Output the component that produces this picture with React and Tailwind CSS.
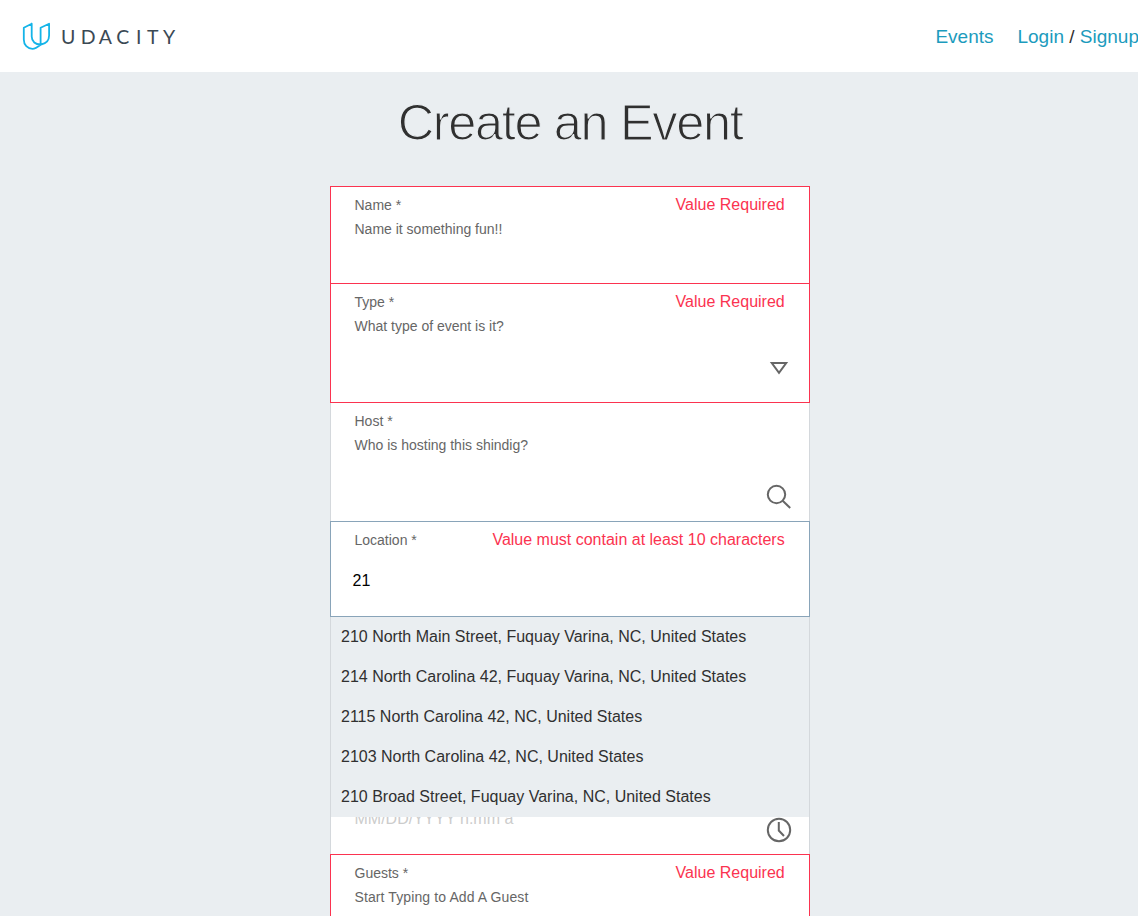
const frames = {
  error: 'z-10 border-[#fb3350]',
  idle: 'border-[#d4d8dc]',
  focus: 'z-20 border-[#89a4b9]',
};

const suggestions = [
  '210 North Main Street, Fuquay Varina, NC, United States',
  '214 North Carolina 42, Fuquay Varina, NC, United States',
  '2115 North Carolina 42, NC, United States',
  '2103 North Carolina 42, NC, United States',
  '210 Broad Street, Fuquay Varina, NC, United States',
];

function Logo() {
  return (
    <svg className="block" width="160" height="32" viewBox="20 20 160 32" fill="none">
      <path
        d="M31.7 23.7 L23.8 27.7 V39.5 C23.8 45 27.5 48.8 32.5 48.8 C35.5 48.8 38 46.8 41 44.5 C46 43.6 49.1 40.3 49.1 35.5 V23.7 L40.6 27.8 V44 M31.7 23.7 V36.5 C31.7 41.5 35.5 44.8 41 44.5"
        stroke="#14b4e8"
        strokeWidth="1.8"
        strokeLinejoin="round"
        strokeLinecap="round"
      />
      <g fill="#3b4954" fontFamily="Lato, sans-serif" fontSize="19.5">
        <text x="61" y="43.5">U</text>
        <text x="80.8" y="43.5">D</text>
        <text x="98.7" y="43.5">A</text>
        <text x="116.2" y="43.5">C</text>
        <text x="136" y="43.5">I</text>
        <text x="147" y="43.5">T</text>
        <text x="163" y="43.5">Y</text>
      </g>
    </svg>
  );
}

function Triangle() {
  return (
    <svg width="26" height="26" viewBox="0 0 26 26" fill="none" stroke="#666" strokeWidth="2">
      <path d="M5.8 8 H20.2 L13 17.8 Z" />
    </svg>
  );
}

function Magnifier() {
  return (
    <svg width="26" height="26" viewBox="0 0 26 26" fill="none" stroke="#666" strokeWidth="2">
      <circle cx="10.5" cy="10.5" r="8.7" />
      <path d="M16.7 16.7 L24.2 24" />
    </svg>
  );
}

function Clock() {
  return (
    <svg width="26" height="26" viewBox="0 0 26 26" fill="none" stroke="#666" strokeWidth="2">
      <circle cx="13" cy="13" r="11.2" />
      <path d="M12.8 5 V13.5 L18 19" />
    </svg>
  );
}

function Field({ label, hint, error, state, size, children }) {
  return (
    <div className={`relative -mb-px flex flex-col border bg-white pl-[23.5px] ${frames[state]} ${size}`}>
      <div className="mt-[6px] flex h-6 items-center justify-between pr-[24.3px] text-sm text-[#666]">
        <span>{label}</span>
        <span className="text-base text-[#fb3350]">{error}</span>
      </div>
      <div className="h-6 text-sm leading-6 text-[#666]">{hint}</div>
      {children}
    </div>
  );
}

export default function App() {
  return (
    <div className="h-[916px] overflow-hidden bg-[#eaeef1] font-['Liberation_Sans',Arial,sans-serif] text-[#303030]">
      <header className="flex h-[72px] items-center justify-between bg-white pl-5">
        <Logo />
        <nav className="-mr-px flex gap-6 whitespace-nowrap pt-[2px] text-[19px] text-[#1c9bbd]">
          <a>Events</a>
          <span>
            <a>Login</a>
            <span className="text-[#303030]"> / </span>
            <a>Signup</a>
          </span>
        </nav>
      </header>
      <main className="mx-auto w-[480px] translate-x-px">
        <h1 className="mb-[35px] mt-[23px] whitespace-nowrap text-center text-[50.5px] leading-[56px] tracking-[-1.35px] [-webkit-text-stroke:1.2px_#eaeef1]">
          Create an Event
        </h1>
        <form>
          <Field label="Name *" hint="Name it something fun!!" error="Value Required" state="error" size="h-[98px]" />
          <Field label="Type *" hint="What type of event is it?" error="Value Required" state="error" size="h-[120px]">
            <div className="mr-[17px] mt-[17px] flex justify-end"><Triangle /></div>
          </Field>
          <Field label="Host *" hint="Who is hosting this shindig?" state="idle" size="h-[120px]">
            <div className="mr-[17px] mt-[27px] flex justify-end"><Magnifier /></div>
          </Field>
          <Field label="Location *" error="Value must contain at least 10 characters" state="focus" size="h-[96px]">
            <div className="-ml-[2px] -mt-[7px] h-6 text-base leading-6 text-black">21</div>
            <ul className="absolute -inset-x-px top-[95px] border-x border-[#d4d8dc] bg-[#eaeef1]">
              {suggestions.map((text) => (
                <li key={text} className="h-10 whitespace-nowrap pl-[10px] text-base leading-10">
                  {text}
                </li>
              ))}
            </ul>
          </Field>
          <Field state="idle" size="h-[239px]">
            <div className="mt-[135px] flex items-start justify-between pr-[17px]">
              <span className="mt-px text-base leading-6 text-[#ccc]">MM/DD/YYYY h:mm a</span>
              <span className="mt-[11px]"><Clock /></span>
            </div>
          </Field>
          <Field
            label="Guests *"
            hint={<span className="tracking-[0.11px]">Start Typing to Add A Guest</span>}
            error="Value Required"
            state="error"
            size="h-[120px]"
          />
        </form>
      </main>
    </div>
  );
}
